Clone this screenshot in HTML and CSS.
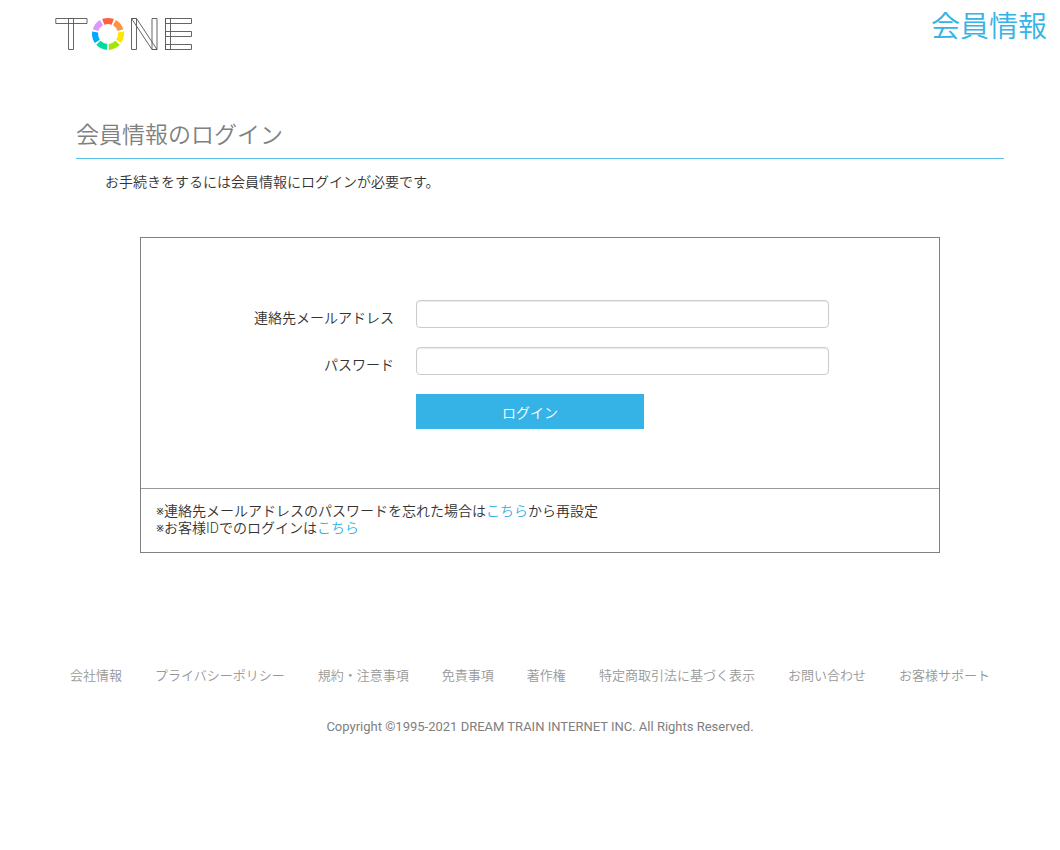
FILE: index.html
```html
<!DOCTYPE html>
<html lang="ja">
<head>
<meta charset="utf-8">
<meta name="viewport" content="width=device-width, initial-scale=1">
<title>会員情報のログイン</title>
<link rel="stylesheet" href="styles.css">
</head>
<body>
<header class="header">
  <svg class="logo" viewBox="0 0 138 34" role="img" aria-label="TONE" fill="none">
    <g stroke="#555" stroke-width=".9">
      <path d="M.8 1.500H32V6.500H.8ZM13.500 1.500H18.500V32.500H13.500Z"/>
      <path d="M76.500 1.500H81.500V32.500H76.500ZM97 1.500H102V32.500H97ZM76.500 1.500H81.500L102 32.500H97Z"/>
      <path d="M110.500 1.500H115.500V32.500H110.500ZM110.500 1.500H136.500V6.500H110.500ZM110.500 14.500H136.500V19.500H110.500ZM110.500 27.500H136.500V32.500H110.500Z"/>
    </g>
    <g stroke-width="6">
      <circle cx="53" cy="17" r="13" pathLength="70" stroke="#ff6040" stroke-dasharray="8.400 61.600" transform="rotate(-111.600 53 17)"/>
      <circle cx="53" cy="17" r="13" pathLength="70" stroke="#ff9440" stroke-dasharray="8.400 61.600" transform="rotate(-60.200 53 17)"/>
      <circle cx="53" cy="17" r="13" pathLength="70" stroke="#ffe600" stroke-dasharray="8.400 61.600" transform="rotate(-8.700 53 17)"/>
      <circle cx="53" cy="17" r="13" pathLength="70" stroke="#a0e800" stroke-dasharray="8.400 61.600" transform="rotate(42.700 53 17)"/>
      <circle cx="53" cy="17" r="13" pathLength="70" stroke="#00dca0" stroke-dasharray="8.400 61.600" transform="rotate(94.100 53 17)"/>
      <circle cx="53" cy="17" r="13" pathLength="70" stroke="#00a8ff" stroke-dasharray="8.400 61.600" transform="rotate(145.500 53 17)"/>
      <circle cx="53" cy="17" r="13" pathLength="70" stroke="#dc96ff" stroke-dasharray="8.400 61.600" transform="rotate(197 53 17)"/>
    </g>
  </svg>
  <p class="site-title">会員情報</p>
</header>
<main class="main">
  <h1 class="heading">会員情報のログイン</h1>
  <p class="lead">お手続きをするには会員情報にログインが必要です。</p>
  <section class="panel">
    <form class="form">
      <label class="label" for="mail">連絡先メールアドレス</label>
      <input class="input" id="mail" type="email">
      <label class="label" for="password">パスワード</label>
      <input class="input" id="password" type="password">
      <button class="button" type="submit">ログイン</button>
    </form>
    <div class="notes">
      <p>※連絡先メールアドレスのパスワードを忘れた場合は<a class="link" href="#">こちら</a>から再設定</p>
      <p>※お客様IDでのログインは<a class="link" href="#">こちら</a></p>
    </div>
  </section>
</main>
<footer class="footer">
  <nav class="nav">
    <a href="#">会社情報</a>
    <a href="#">プライバシーポリシー</a>
    <a href="#">規約・注意事項</a>
    <a href="#">免責事項</a>
    <a href="#">著作権</a>
    <a href="#">特定商取引法に基づく表示</a>
    <a href="#">お問い合わせ</a>
    <a href="#">お客様サポート</a>
  </nav>
  <p class="copyright">Copyright ©1995-2021 DREAM TRAIN INTERNET INC. All Rights Reserved.</p>
</footer>
</body>
</html>
```
FILE: styles.css
```css
* {
  box-sizing: border-box;
}
body {
  margin: 0;
  background: #fff;
  color: #333;
  font-family: Roboto, Inter, "Noto Sans CJK JP", sans-serif;
  font-size: 14px;
  font-weight: 350;
  line-height: 17px;
}
p, h1 {
  margin: 0;
}
.header {
  display: flex;
  justify-content: space-between;
  align-items: flex-start;
  padding: 5px 13px 0 55px;
}
.logo {
  width: 138px;
  height: 34px;
  margin-top: 12px;
}
.site-title {
  color: #36b3e6;
  font-size: 29px;
  line-height: 44px;
}
.main {
  padding: 66px 56px 0 76px;
}
.heading {
  padding-bottom: 4px;
  border-bottom: 1px solid #5bc2eb;
  color: #808080;
  font-size: 23px;
  font-weight: 350;
  line-height: 37px;
}
.lead {
  padding: 15px 29px 0;
}
.panel {
  max-width: 800px;
  margin: 46px auto 0;
  border: 1px solid #808080;
}
.form {
  display: grid;
  grid-template-columns: 253px minmax(0, 413px);
  column-gap: 22px;
  row-gap: 19px;
  padding: 62px 22px 59px 0;
}
.label {
  padding-top: 10px;
  text-align: right;
}
.input {
  width: 100%;
  height: 28px;
  padding: 4px 8px;
  border: 1px solid #ccc;
  border-radius: 4px;
  box-shadow: inset 0 1px 1px rgba(0, 0, 0, .08);
  font: inherit;
}
.button {
  grid-column: 2;
  width: 228px;
  max-width: 100%;
  height: 35px;
  padding: 3px 0 0;
  border: 0;
  background: #36b3e6;
  color: #fff;
  font: inherit;
}
.notes {
  padding: 14px 15px 15px;
  border-top: 1px solid #999;
}
.link {
  color: #36b3e6;
  text-decoration: none;
}
.footer {
  padding: 114px 20px 0;
  font-size: 13px;
}
.nav {
  display: flex;
  flex-wrap: wrap;
  justify-content: center;
  gap: 17px 33px;
}
.nav a {
  color: #999;
  text-decoration: none;
}
.copyright {
  padding: 34px 0 0 20px;
  color: #808080;
  font-weight: 400;
  text-align: center;
}
```
